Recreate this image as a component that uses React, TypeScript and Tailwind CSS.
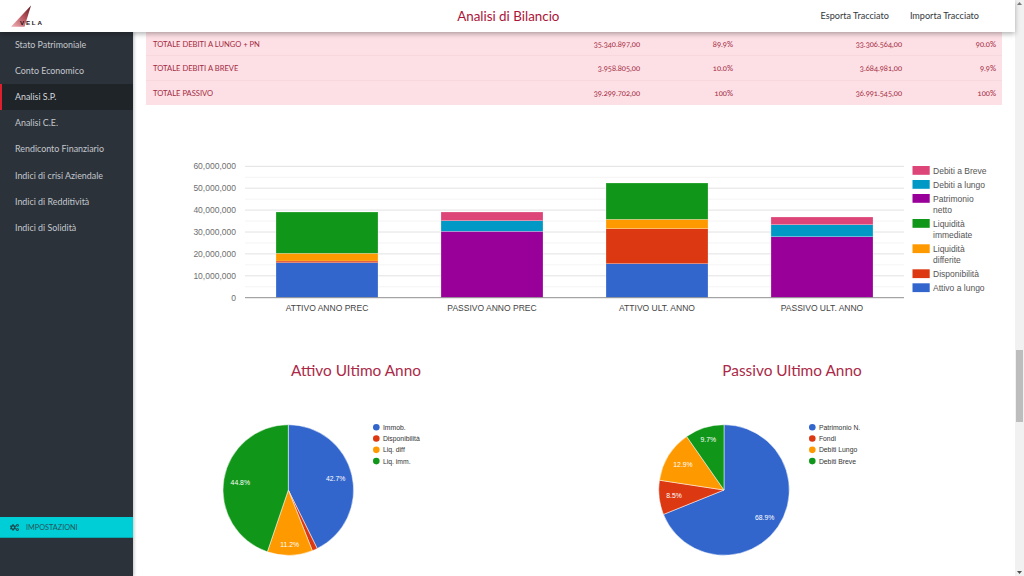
import { FaCogs } from "react-icons/fa";

const navItems = ["Stato Patrimoniale", "Conto Economico", "Analisi S.P.", "Analisi C.E.", "Rendiconto Finanziario", "Indici di crisi Aziendale", "Indici di Redditività", "Indici di Solidità"];
const rows = [
  ["TOTALE DEBITI A LUNGO + PN", "35.340.897,00", "89.9%", "33.306.564,00", "90.0%"],
  ["TOTALE DEBITI A BREVE", "3.958.805,00", "10.0%", "3.684.981,00", "9.9%"],
  ["TOTALE PASSIVO", "39.299.702,00", "100%", "36.991.545,00", "100%"],
];
const C = { blue: "#3366cc", red: "#dc3912", orange: "#ff9900", green: "#109618", purple: "#990099", cyan: "#0099c6", pink: "#dd4477" };
const bars = [
  { x: 276, label: "ATTIVO ANNO PREC", segs: [[262.7, 297.7, C.blue], [261, 262.7, C.red], [253.3, 261, C.orange], [212, 253.3, C.green]] },
  { x: 441, label: "PASSIVO ANNO PREC", segs: [[231.3, 297.7, C.purple], [220.7, 231.3, C.cyan], [212, 220.7, C.pink]] },
  { x: 606, label: "ATTIVO ULT. ANNO", segs: [[263.7, 297.7, C.blue], [228.7, 263.7, C.red], [219.3, 228.7, C.orange], [183, 219.3, C.green]] },
  { x: 771, label: "PASSIVO ULT. ANNO", segs: [[236.7, 297.7, C.purple], [224.7, 236.7, C.cyan], [217, 224.7, C.pink]] },
] as const;
const legend: [number, string, string[]][] = [
  [166, C.pink, ["Debiti a Breve"]],
  [180, C.cyan, ["Debiti a lungo"]],
  [194, C.purple, ["Patrimonio", "netto"]],
  [219, C.green, ["Liquidità", "immediate"]],
  [244.3, C.orange, ["Liquidità", "differite"]],
  [269.3, C.red, ["Disponibilità"]],
  [283.3, C.blue, ["Attivo a lungo"]],
];
const arial = "'Liberation Sans', Arial, sans-serif";

function BarChart() {
  const majors = [0, 1, 2, 3, 4, 5, 6].map((k) => 166.3 + 21.9 * k);
  const minors = [0, 1, 2, 3, 4, 5].map((k) => 177.25 + 21.9 * k);
  return (
    <svg viewBox="146 150 856 175" width={856} height={175} className="block" fontFamily={arial} fontSize={8.53}>
      {minors.map((y) => <line key={y} x1={245} x2={904} y1={y} y2={y} stroke="#f4f4f4" strokeWidth={1} />)}
      {majors.slice(0, 6).map((y) => <line key={y} x1={245} x2={904} y1={y} y2={y} stroke="#e2e2e2" strokeWidth={1} />)}
      {["60,000,000", "50,000,000", "40,000,000", "30,000,000", "20,000,000", "10,000,000", "0"].map((t, i) => (
        <text key={t} x={236} y={169.4 + 21.9 * i} textAnchor="end" fill="#6f6f6f">{t}</text>
      ))}
      {bars.map((b) => (
        <g key={b.x}>
          {b.segs.map(([a, c, col]) => (
            <rect key={a} x={b.x} y={a} width={102} height={c - a} fill={col} stroke="#ffffff" strokeOpacity={0.45} strokeWidth={0.5} />
          ))}
          <text x={b.x + 51} y={311} textAnchor="middle" fill="#444444">{b.label}</text>
        </g>
      ))}
      <line x1={245} x2={904} y1={297.7} y2={297.7} stroke="#8f8f8f" strokeWidth={1} />
      {legend.map(([y, col, lines]) => (
        <g key={y}>
          <rect x={912.5} y={y} width={17.2} height={8.8} fill={col} />
          {lines.map((l, i) => (
            <text key={l} x={933} y={y + 7.6 + i * 11.3} fill="#555555">{l}</text>
          ))}
        </g>
      ))}
    </svg>
  );
}

function Pie({ box, cx, slices, labels, legendX, items }: { box: number; cx: number; slices: [number, string][]; labels: [string, number, number][]; legendX: number; items: [string, string][] }) {
  const r = 65.3, cy = 490;
  let acc = 0;
  return (
    <svg viewBox={`${box} 410 436 166`} width={436} height={166} className="block" fontFamily={arial} fontSize={6.83}>
      {slices.map(([p, col]) => {
        const a0 = (acc / 100) * 2 * Math.PI;
        acc += p;
        const a1 = (acc / 100) * 2 * Math.PI;
        const d = `M${cx} ${cy}L${cx + r * Math.sin(a0)} ${cy - r * Math.cos(a0)}A${r} ${r} 0 ${p > 50 ? 1 : 0} 1 ${cx + r * Math.sin(a1)} ${cy - r * Math.cos(a1)}Z`;
        return <path key={col} d={d} fill={col} stroke="#ffffff" strokeWidth={0.5} />;
      })}
      {labels.map(([t, x, y]) => <text key={t} x={x} y={y + 2.4} textAnchor="middle" fill="#ffffff">{t}</text>)}
      {items.map(([t, col], i) => (
        <g key={t}>
          <circle cx={legendX} cy={427.3 + i * 11.27} r={3.3} fill={col} />
          <text x={legendX + 6.6} y={429.7 + i * 11.27} fill="#333333">{t}</text>
        </g>
      ))}
    </svg>
  );
}

function Logo() {
  return (
    <svg width={48} height={32} viewBox="0 0 48 32" className="block">
      <defs>
        <linearGradient id="vela" x1="0" y1="1" x2="1" y2="0">
          <stop offset="0" stopColor="#f0b4b8" />
          <stop offset="0.55" stopColor="#b5525c" />
          <stop offset="1" stopColor="#5e1620" />
        </linearGradient>
      </defs>
      <path d="M31 5.5L11 26.7H24.5Z" fill="url(#vela)" />
      <text x={20} y={24.6} fontFamily={arial} fontSize={6.2} fontWeight={700} letterSpacing={1.8} fill="#1a1214">VELA</text>
    </svg>
  );
}

export default function App() {
  return (
    <div className="flex h-screen w-full overflow-hidden bg-white font-['Lato','Open_Sans',sans-serif]">
      <div className="flex min-w-0 flex-1 flex-col">
        <header className="relative z-10 grid h-8 shrink-0 grid-cols-[48px_1fr_auto] items-center bg-white shadow-[0_2px_5px_rgba(0,0,0,0.3)]">
          <Logo />
          <h1 className="pl-[148px] text-center text-[13.4px] font-normal text-[#ab1538]">Analisi di Bilancio</h1>
          <nav className="flex gap-[21px] pr-9 text-[9.1px] text-[#33383d]">
            <span>Esporta Tracciato</span>
            <span>Importa Tracciato</span>
          </nav>
        </header>
        <div className="flex min-h-0 flex-1">
          <aside className="flex w-[133px] shrink-0 flex-col bg-[#2c323a] shadow-[1px_0_3px_rgba(0,0,0,0.25)]">
            {navItems.map((n, i) => (
              <div key={n} className={i === 2 ? "flex h-[26.15px] items-center border-l-2 border-[#dd1f2e] bg-[#1f2429] pb-[1px] pl-[13px] text-[8.9px] text-[#d4d8dc]" : "flex h-[26.15px] items-center pb-[1px] pl-[15px] text-[8.9px] text-[#c3c8cd]"}>
                {n}
              </div>
            ))}
            <div className="mt-auto mb-[38px] flex h-[21px] items-center gap-[7px] border-b border-[#08a8ae] bg-[#00ced6] pl-[10px] text-[7.3px] text-[#25555c]">
              <FaCogs size={9} className="text-[#1c4a50]" />
              <span className="pt-[2px]">IMPOSTAZIONI</span>
            </div>
          </aside>
          <main className="min-w-0 flex-1 px-[13px]">
            <div className="bg-[#fde0e5] text-[7.6px] text-[#a32a42] oldstyle-nums">
              {rows.map((r) => (
                <div key={r[0]} className="grid h-[24.4px] grid-cols-[400px_94px_93px_169px_94px] items-center border-b border-[#f7d8dd] pt-[2px] pr-[6px] last:border-b-0">
                  <span className="pl-[7px]">{r[0]}</span>
                  <span className="text-right">{r[1]}</span>
                  <span className="text-right">{r[2]}</span>
                  <span className="text-right">{r[3]}</span>
                  <span className="text-right">{r[4]}</span>
                </div>
              ))}
            </div>
            <div className="mt-[44.7px]"><BarChart /></div>
            <div className="-mx-2 grid grid-cols-2">
              <section>
                <h2 className="mt-[36px] h-[49px] text-center text-[15.4px] font-normal leading-[18px] text-[#ab2a48]">Attivo Ultimo Anno</h2>
                <Pie box={138} cx={288.3}
                  slices={[[42.7, C.blue], [1.3, C.red], [11.2, C.orange], [44.8, C.green]]}
                  labels={[["42.7%", 335.7, 479], ["11.2%", 289.7, 544.3], ["44.8%", 240.3, 482.3]]}
                  legendX={376.3}
                  items={[["Immob.", C.blue], ["Disponibilità", C.red], ["Liq. diff", C.orange], ["Liq. imm.", C.green]]} />
              </section>
              <section>
                <h2 className="mt-[36px] h-[49px] text-center text-[15.4px] font-normal leading-[18px] text-[#ab2a48]">Passivo Ultimo Anno</h2>
                <Pie box={574} cx={724}
                  slices={[[68.9, C.blue], [8.5, C.red], [12.9, C.orange], [9.7, C.green]]}
                  labels={[["68.9%", 764.7, 517.3], ["8.5%", 674, 496], ["12.9%", 683, 465], ["9.7%", 708.3, 439.3]]}
                  legendX={812.3}
                  items={[["Patrimonio N.", C.blue], ["Fondi", C.red], ["Debiti Lungo", C.orange], ["Debiti Breve", C.green]]} />
              </section>
            </div>
          </main>
        </div>
      </div>
      <div className="flex w-[9px] shrink-0 flex-col items-center bg-[#f1f1f1]">
        <svg width={5} height={3} viewBox="0 0 5 3" className="mt-[2px] shrink-0"><path d="M2.5 0L5 3H0Z" fill="#7a7a7a" /></svg>
        <div className="mt-[345px] h-[72px] w-[7px] shrink-0 bg-[#bdbdbd]" />
        <svg width={5} height={3} viewBox="0 0 5 3" className="mt-auto mb-[2px] shrink-0"><path d="M0 0H5L2.5 3Z" fill="#505050" /></svg>
      </div>
    </div>
  );
}
